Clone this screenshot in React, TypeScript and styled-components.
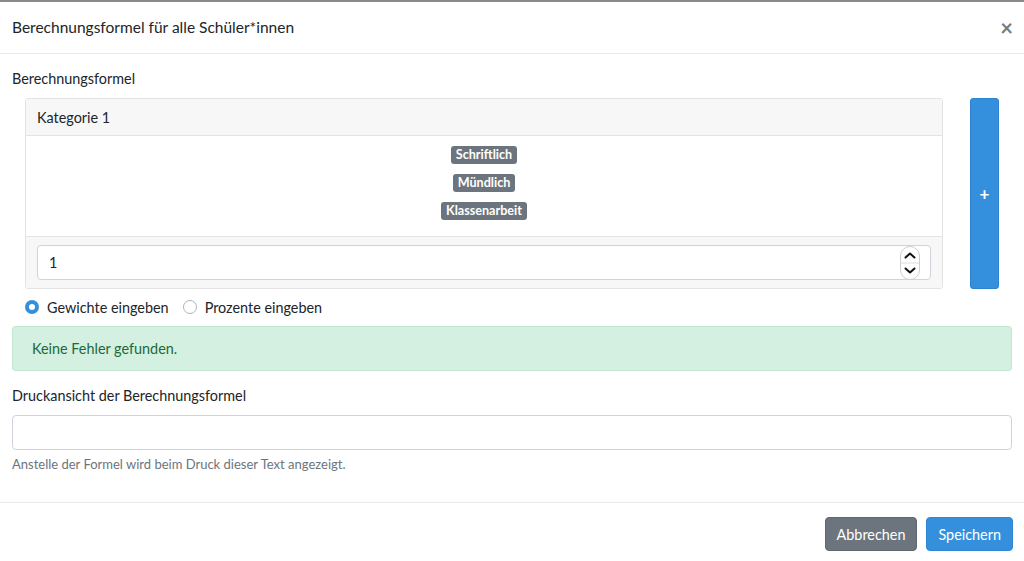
import React from 'react'
import styled, { createGlobalStyle } from 'styled-components'

const FONT = `'Lato', 'Open Sans', 'Noto Sans', sans-serif`

const GlobalStyle = createGlobalStyle`
  * { box-sizing: border-box; }
  body {
    margin: 0;
    background: #ffffff;
    font-family: ${FONT};
    font-size: 14.4px;
    color: #212529;
  }
`

const App = () => {
  return (
    <>
      <GlobalStyle />
      <Modal>
        <Header>
          <Title>Berechnungsformel für alle Schüler*innen</Title>
          <CloseButton aria-label="Schließen">×</CloseButton>
        </Header>
        <Body>
          <Label>Berechnungsformel</Label>
          <FormulaRow>
            <Card>
              <CardHeader>Kategorie 1</CardHeader>
              <CardBody>
                <Badge>Schriftlich</Badge>
                <Badge>Mündlich</Badge>
                <Badge>Klassenarbeit</Badge>
              </CardBody>
              <CardFooter>
                <NumberField>
                  <NumberInput type="text" defaultValue="1" />
                  <Spinner>
                    <svg width="20" height="34" viewBox="0 0 20 34">
                      <rect x="0.5" y="0.5" width="19" height="33" rx="9.5" fill="#fff" stroke="#cfcfcf" />
                      <line x1="1" y1="17" x2="19" y2="17" stroke="#dcdcdc" />
                      <path d="M5.5 11.5 L10 7.5 L14.5 11.5" fill="none" stroke="#111" strokeWidth="2" strokeLinecap="round" strokeLinejoin="round" />
                      <path d="M5.5 22.5 L10 26.5 L14.5 22.5" fill="none" stroke="#111" strokeWidth="2" strokeLinecap="round" strokeLinejoin="round" />
                    </svg>
                  </Spinner>
                </NumberField>
              </CardFooter>
            </Card>
            <AddButton>+</AddButton>
          </FormulaRow>
          <RadioRow>
            <RadioOption>
              <RadioCircle $checked />
              Gewichte eingeben
            </RadioOption>
            <RadioOption>
              <RadioCircle />
              Prozente eingeben
            </RadioOption>
          </RadioRow>
          <Alert>Keine Fehler gefunden.</Alert>
          <Label>Druckansicht der Berechnungsformel</Label>
          <TextInput type="text" />
          <HelpText>Anstelle der Formel wird beim Druck dieser Text angezeigt.</HelpText>
        </Body>
        <Footer>
          <Button $variant="secondary">Abbrechen</Button>
          <Button $variant="primary">Speichern</Button>
        </Footer>
      </Modal>
    </>
  )
}

export default App

/* ****************************************************************
  Modal: Berechnungsformel
*******************************************************************/

const Modal = styled.div`
  width: 1024px;
  min-height: 561px;
  border-top: 2px solid #8a8a8a;
  background: #fff;
  display: flex;
  flex-direction: column;
`

const Header = styled.div`
  display: flex;
  align-items: center;
  justify-content: space-between;
  height: 52px;
  padding: 0 12px;
  border-bottom: 1px solid #e9ecef;
`

const Title = styled.h5`
  margin: 0;
  font-size: 15.5px;
  font-weight: 400;
  line-height: 1.5;
`

const CloseButton = styled.button`
  border: 0;
  background: transparent;
  padding: 0;
  margin-right: -1px;
  font-family: ${FONT};
  font-size: 22px;
  font-weight: 700;
  line-height: 1;
  color: #7a7a7a;
`

const Body = styled.div`
  padding: 14px 12px 0;
  display: flex;
  flex-direction: column;
`

const Label = styled.label`
  display: block;
  line-height: 21px;
  margin-bottom: 9px;
`

const FormulaRow = styled.div`
  display: flex;
  gap: 27px;
  padding: 0 13px;
`

const Card = styled.div`
  flex: 1;
  border: 1px solid #e3e3e3;
  border-radius: 3px;
  overflow: hidden;
`

const CardHeader = styled.div`
  height: 37px;
  display: flex;
  align-items: center;
  padding: 0 11px;
  background: #f7f7f7;
  border-bottom: 1px solid #e3e3e3;
`

const CardBody = styled.div`
  height: 100px;
  padding: 10px 0 0;
  display: flex;
  flex-direction: column;
  align-items: center;
  gap: 10px;
  background: #fff;
`

const Badge = styled.span`
  display: inline-block;
  padding: 2px 5px;
  border-radius: 3px;
  background: #6c757d;
  color: #fff;
  font-size: 12.6px;
  font-weight: 700;
  line-height: 14px;
`

const CardFooter = styled.div`
  padding: 8px 11px 8px;
  background: #f7f7f7;
  border-top: 1px solid #e3e3e3;
`

const NumberField = styled.div`
  display: flex;
  align-items: center;
  height: 35px;
  padding: 0 10px 0 11px;
  background: #fff;
  border: 1px solid #ced4da;
  border-radius: 4px;
`

const NumberInput = styled.input`
  flex: 1;
  border: 0;
  outline: none;
  padding: 0;
  font-family: ${FONT};
  font-size: 14.4px;
  color: #212529;
  background: transparent;
`

const Spinner = styled.span`
  display: flex;
  align-items: center;
`

const AddButton = styled.button`
  width: 29px;
  height: 191px;
  border: 1px solid #2d83cf;
  border-radius: 3px;
  background: #3490dc;
  color: #fff;
  font-family: ${FONT};
  font-size: 17px;
  font-weight: 700;
  padding: 0;
`

const RadioRow = styled.div`
  display: flex;
  align-items: center;
  gap: 14px;
  height: 36px;
  padding: 0 13px 0 13px;
`

const RadioOption = styled.label`
  display: flex;
  align-items: center;
  gap: 8px;
`

const RadioCircle = styled.span<{ $checked?: boolean }>`
  width: 14px;
  height: 14px;
  border-radius: 50%;
  border: ${p => (p.$checked ? '4px solid #3490dc' : '1px solid #adb5bd')};
  background: #fff;
`

const Alert = styled.div`
  margin-top: 1px;
  height: 45px;
  display: flex;
  align-items: center;
  padding: 0 19px;
  background: #d4f0e0;
  border: 1px solid #c3e8d1;
  border-radius: 3px;
  color: #1d6a3b;
  margin-bottom: 14px;
`

const TextInput = styled.input`
  height: 35px;
  width: 100%;
  margin-top: 0;
  border: 1px solid #ced4da;
  border-radius: 4px;
  padding: 0 12px;
  font-family: ${FONT};
  font-size: 14.4px;
`

const HelpText = styled.small`
  display: block;
  margin-top: 5px;
  font-size: 13px;
  color: #6c757d;
  line-height: 18px;
`

const Footer = styled.div`
  margin-top: 29px;
  border-top: 1px solid #e9ecef;
  display: flex;
  justify-content: flex-end;
  gap: 9px;
  padding: 14px 11px 0;
`

const Button = styled.button<{ $variant: 'primary' | 'secondary' }>`
  height: 34px;
  padding: 0 11px;
  border-radius: 4px;
  border: 1px solid ${p => (p.$variant === 'primary' ? '#2f86d4' : '#5f686f')};
  background: ${p => (p.$variant === 'primary' ? '#3490dc' : '#6c757d')};
  color: #fff;
  font-family: ${FONT};
  font-size: 14.4px;
`
